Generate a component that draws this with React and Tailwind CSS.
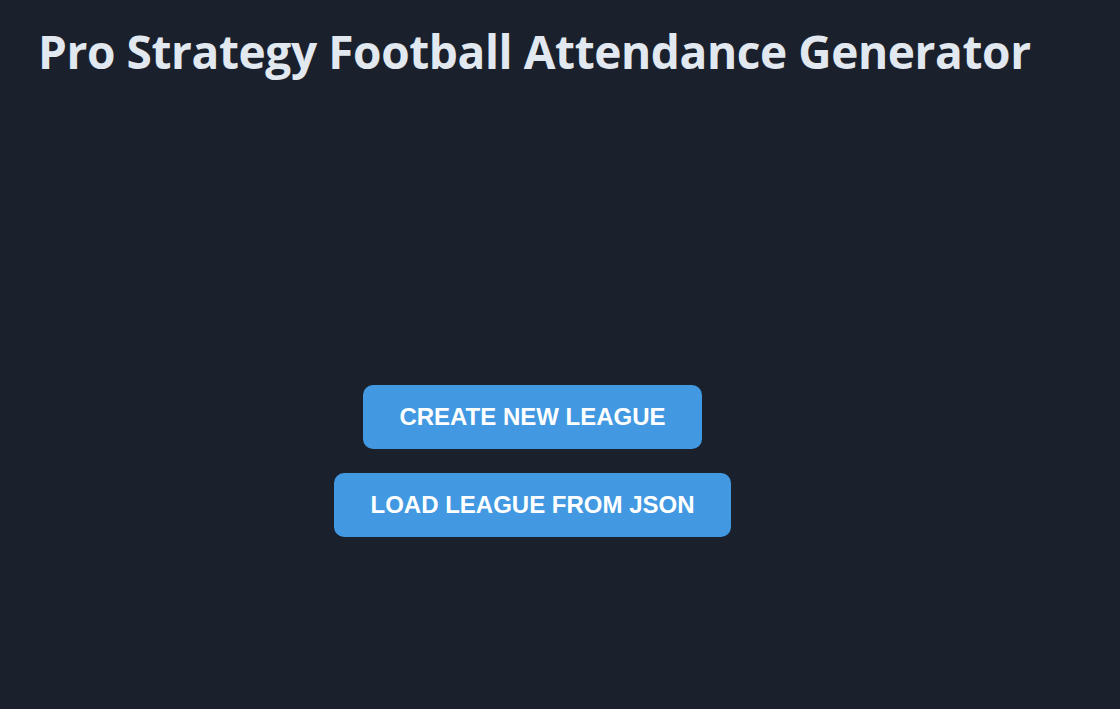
export default function App() {
  return (
    <div className="min-h-[709px] w-full bg-[#1a202c]">
      <div className="ml-[38px] flex w-[989px] flex-col">
        <h1 className="pt-[19px] font-['Open_Sans','Noto_Sans',sans-serif] text-[46px] font-bold leading-[64px] tracking-[-0.4px] text-[#e2e8f0] whitespace-nowrap">
          Pro Strategy Football Attendance Generator
        </h1>
        <div className="mt-[302px] flex flex-col items-center gap-6">
          <button className="h-16 rounded-[10px] bg-[#4299e1] px-9 font-['Liberation_Sans',Arial,sans-serif] text-[24px] font-bold text-white">
            CREATE NEW LEAGUE
          </button>
          <button className="h-16 rounded-[10px] bg-[#4299e1] px-9 font-['Liberation_Sans',Arial,sans-serif] text-[24px] font-bold text-white">
            LOAD LEAGUE FROM JSON
          </button>
        </div>
      </div>
    </div>
  );
}
